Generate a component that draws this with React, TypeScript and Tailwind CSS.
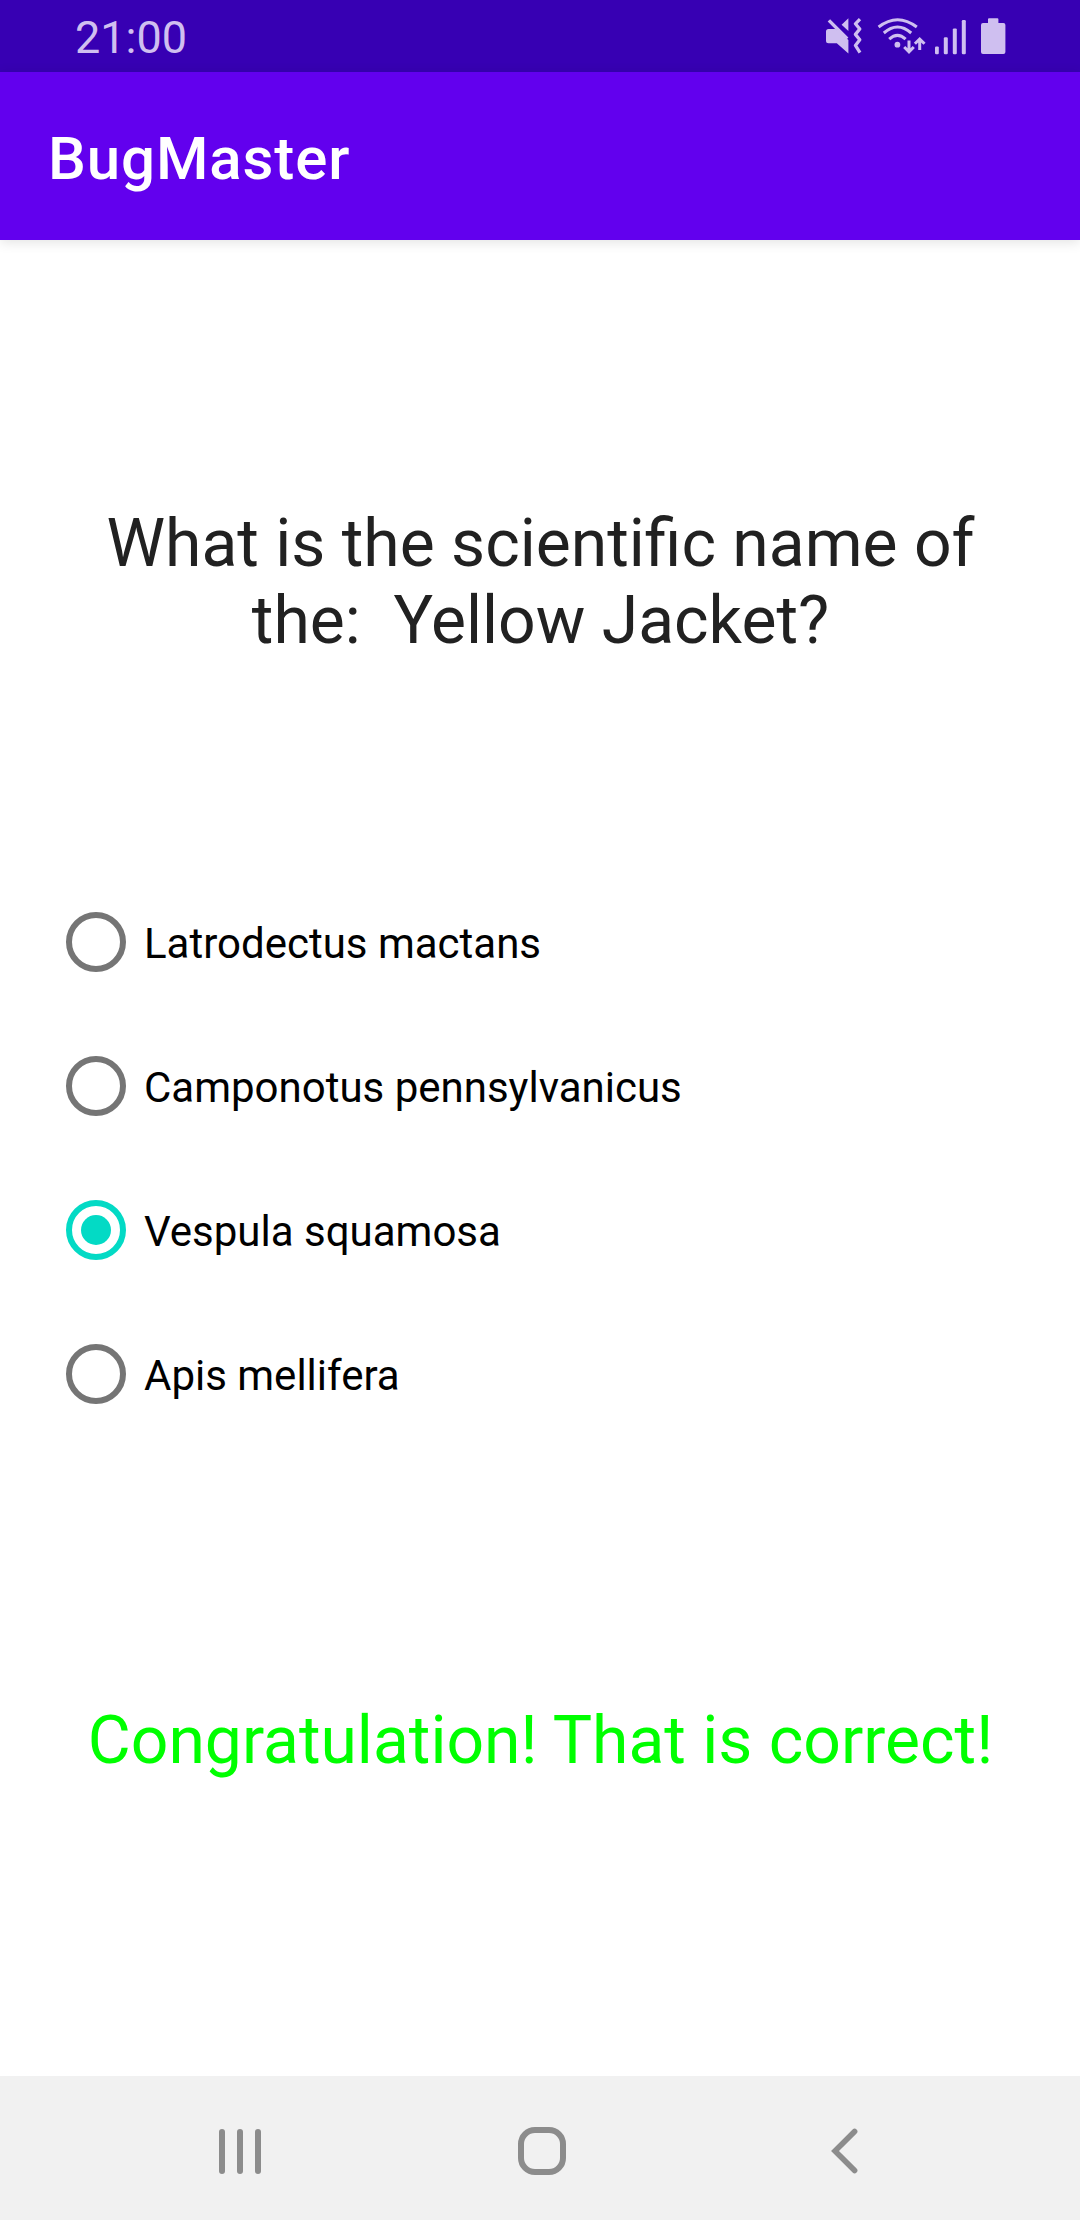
const options = [
  { label: "Latrodectus mactans", selected: false },
  { label: "Camponotus pennsylvanicus", selected: false },
  { label: "Vespula squamosa", selected: true },
  { label: "Apis mellifera", selected: false },
];

function MuteVibrateIcon() {
  return (
    <svg width="36" height="36" viewBox="0 0 36 36" fill="none">
      <path d="M0 13.4Q0 10.9 2.5 10.9H9.6L22.4 22V35.5L10.8 25.2H2.5Q0 25.2 0 22.7Z" fill="currentColor" />
      <path d="M15.6 6.8L22.4 .2V13Z" fill="currentColor" />
      <path d="M2.9 2.4L21.2 20.8" stroke="currentColor" strokeWidth="3.4" />
      <path d="M34 1.2L29.4 5.8L33.8 11L29.4 16.4L33.8 21.8L29.4 27.4L34 34.6" stroke="currentColor" strokeWidth="3.3" strokeLinejoin="round" />
    </svg>
  );
}

function WifiIcon() {
  return (
    <svg width="49" height="36" viewBox="0 0 49 36" fill="none" stroke="currentColor" strokeWidth="3">
      <path d="M1.6 9Q20.5 -5.6 39.8 9" />
      <path d="M6.8 15Q20.5 3 34.2 15" />
      <path d="M12.2 21.2Q20.5 13.4 28.6 21.2" />
      <circle cx="20.4" cy="26.7" r="2.9" fill="currentColor" stroke="none" />
      <path d="M32 22.6V33.6M27.2 29L32 33.8L36.8 29" />
      <path d="M42.7 32V21.4M37.9 25.8L42.7 21L47.5 25.8" />
    </svg>
  );
}

function SignalIcon() {
  return (
    <svg width="32" height="35" viewBox="0 0 32 35" fill="currentColor">
      <rect x="0" y="26.4" width="3.8" height="7.8" rx="1.2" />
      <rect x="8.8" y="17.2" width="4" height="17" rx="1.2" />
      <rect x="17.8" y="8.4" width="4" height="25.8" rx="1.2" />
      <rect x="26.8" y="0" width="4" height="34.2" rx="1.2" />
    </svg>
  );
}

function BatteryIcon() {
  return (
    <svg width="25" height="37" viewBox="0 0 25 37" fill="currentColor">
      <path d="M7 5V1.2Q7 .2 8 .2H16.4Q17.4 .2 17.4 1.2V5H22.4Q24.4 5 24.4 7V34Q24.4 36 22.4 36H2Q0 36 0 34V7Q0 5 2 5Z" />
    </svg>
  );
}

function Radio({ selected }: { selected: boolean }) {
  return selected ? (
    <span className="flex size-[60px] items-center justify-center rounded-full border-[6px] border-[#03dac5]">
      <span className="size-[30px] rounded-full bg-[#03dac5]" />
    </span>
  ) : (
    <span className="size-[60px] rounded-full border-[6px] border-[#757575]" />
  );
}

export default function App() {
  return (
    <div className="flex h-[2220px] w-[1080px] flex-col overflow-hidden bg-white font-[Roboto,sans-serif]">
      <div className="flex h-[72px] shrink-0 items-start bg-[#3700b3] pr-[74px] pl-[75px] text-[#cfbff0]">
        <span className="mt-[11px] text-[45px] leading-[53px]">21:00</span>
        <div className="mt-[18px] ml-auto flex items-start">
          <MuteVibrateIcon />
          <div className="ml-[15px]"><WifiIcon /></div>
          <div className="mt-[2px] ml-[9px]"><SignalIcon /></div>
          <div className="ml-[14px]"><BatteryIcon /></div>
        </div>
      </div>
      <header className="z-10 flex h-[168px] shrink-0 items-center bg-[#6200ee] pt-[5px] pl-[48px] shadow-[0_2px_12px_rgba(0,0,0,0.12)]">
        <h1 className="text-[60px] leading-[70px] font-medium tracking-[0.9px] text-white">BugMaster</h1>
      </header>
      <main className="flex grow flex-col pt-[265px]">
        <h2 className="pl-px text-center text-[66px] leading-[77px] whitespace-pre text-[#212121]">
          {"What is the scientific name of\nthe:  Yellow Jacket?"}
        </h2>
        <div className="mt-[211px] flex flex-col pl-[66px]">
          {options.map((option) => (
            <label key={option.label} className="flex h-[144px] items-center gap-[18px]">
              <Radio selected={option.selected} />
              <span className="pt-[3px] text-[42px] leading-[49px] text-black">{option.label}</span>
            </label>
          ))}
        </div>
        <p className="mt-[256px] pl-px text-center text-[66px] leading-[77px] text-[#00ff00]">
          Congratulation! That is correct!
        </p>
      </main>
      <nav className="flex h-[144px] shrink-0 items-center bg-[#f1f1f1] pt-[6px] pl-[219px] text-[#8c8c8c]">
        <div className="flex gap-[12px]">
          <span className="h-[45px] w-[6px] rounded-full bg-current" />
          <span className="h-[45px] w-[6px] rounded-full bg-current" />
          <span className="h-[45px] w-[6px] rounded-full bg-current" />
        </div>
        <span className="ml-[257px] size-[48px] rounded-[17px] border-[6px] border-current" />
        <svg className="ml-[265px]" width="28" height="46" viewBox="0 0 28 46" fill="none" stroke="currentColor" strokeWidth="5.6" strokeLinecap="round">
          <path d="M23.6 3.4L4 23L23.6 42.6" />
        </svg>
      </nav>
    </div>
  );
}
